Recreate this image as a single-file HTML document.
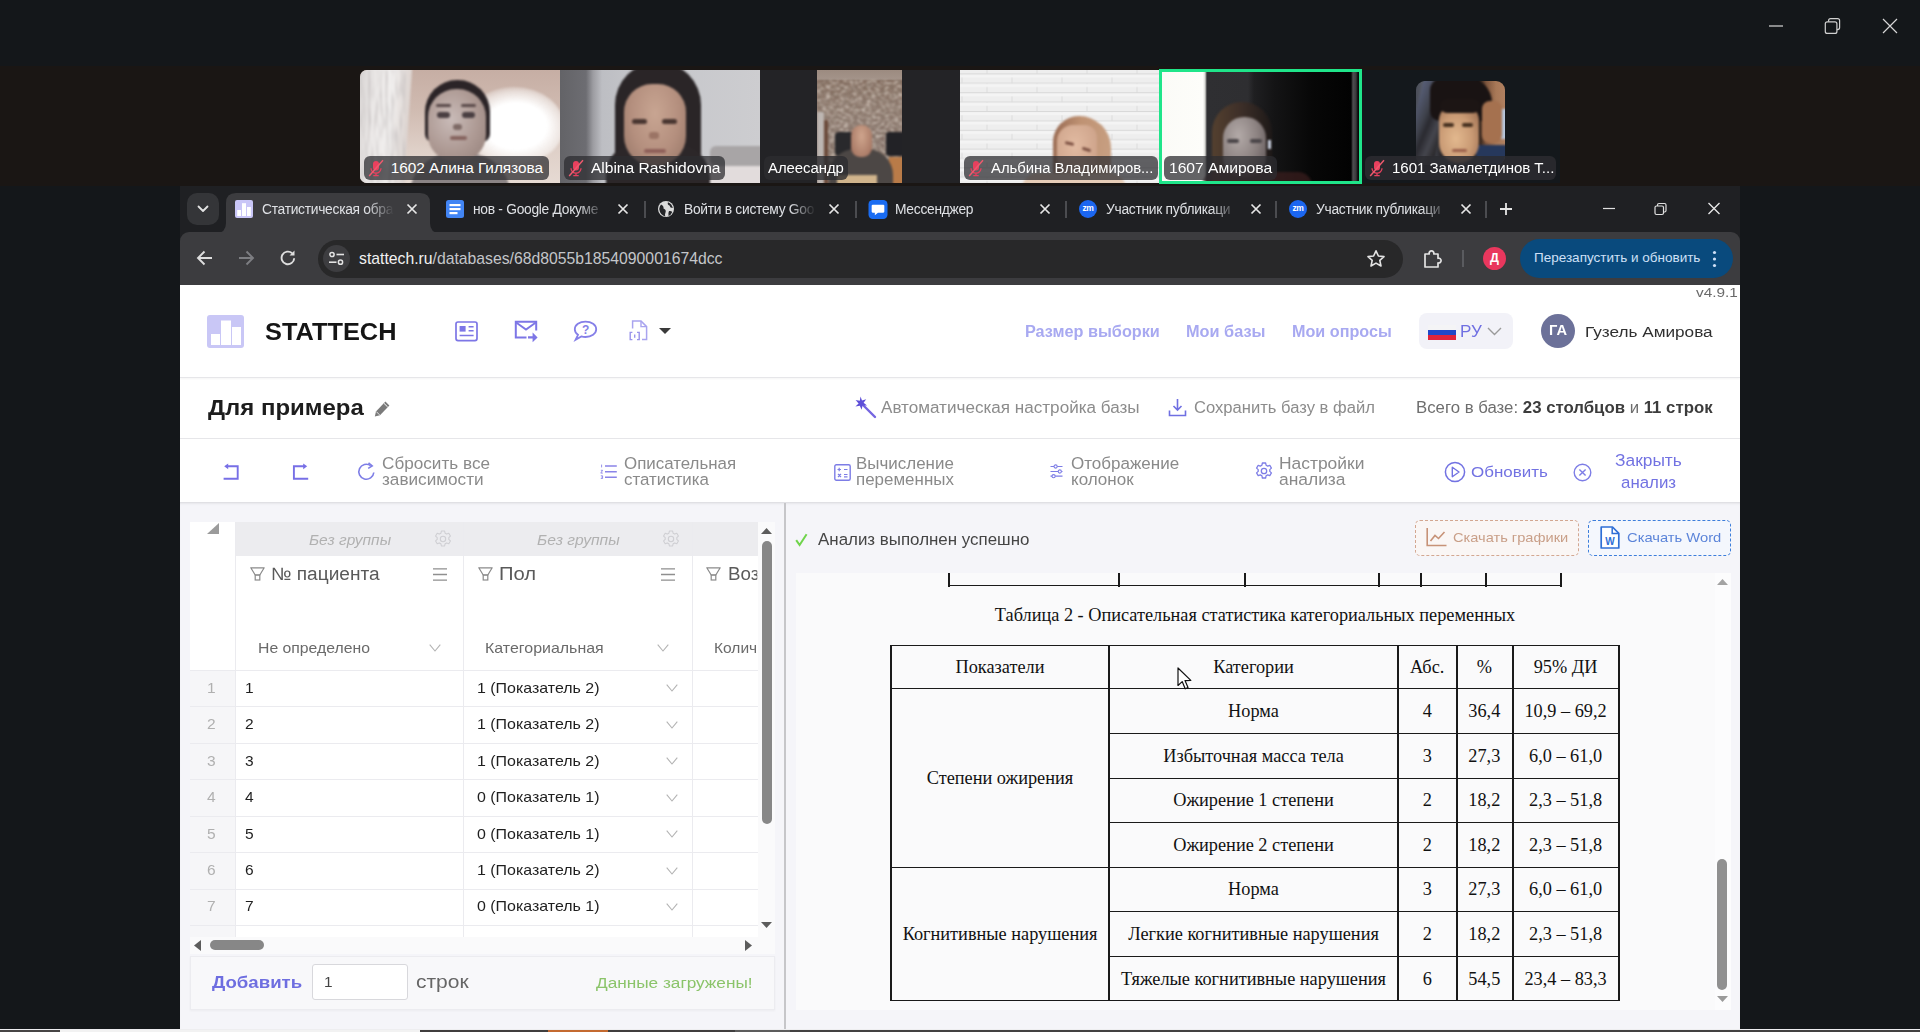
<!DOCTYPE html>
<html lang="ru">
<head>
<meta charset="utf-8">
<title>Zoom</title>
<style>
*{box-sizing:border-box;margin:0;padding:0}
html,body{width:1920px;height:1032px;overflow:hidden;background:#14171a;font-family:"Liberation Sans",sans-serif;}
.abs{position:absolute}
#root{position:relative;width:1920px;height:1032px;overflow:hidden;background:#14171a}
/* ---- zoom frame ---- */
#ztop{left:0;top:0;width:1920px;height:66px;background:#14171a}
#zstrip{left:0;top:66px;width:1920px;height:120px;background:#1a1614}
.thumb{position:absolute;top:70px;width:200px;height:113px;overflow:hidden;background:#222}
.vid{position:absolute;left:0;top:0;right:0;bottom:0;filter:blur(1.1px)}
.zlabel{position:absolute;left:4px;bottom:3px;height:24px;padding:0 0 0 2.5px;border-radius:6px;background:rgba(44,44,48,.74);color:#fff;font-size:15.4px;letter-spacing:-0.05px;line-height:24px;white-space:nowrap;display:flex;align-items:center;overflow:hidden}
.zlabel svg{margin-right:6.3px;flex:none}

/* chrome */
#tabbar{left:0;top:0;width:1560px;height:60px;background:#1f2023}
#tbar{left:0;top:46px;width:1560px;height:53px;background:#3c3c3f;border-radius:9px 9px 0 0}
.tab{position:absolute;top:7px;height:39px;font-size:13.8px;letter-spacing:-0.28px;color:#dfe1e5;line-height:32px;white-space:nowrap}
.tab .tt{position:absolute;left:36px;top:1px;width:132px;height:32px;overflow:hidden;-webkit-mask-image:linear-gradient(90deg,#000 80%,transparent 100%);mask-image:linear-gradient(90deg,#000 80%,transparent 100%)}
.tab .fav{position:absolute;left:9px;top:7px;width:18px;height:18px}
.tab .x{position:absolute;left:180px;top:10px;width:12px;height:12px}
.tsep{position:absolute;top:15px;width:1.5px;height:17px;background:#4b4c50}
.ticon{position:absolute}

/* page */
#page{font-size:17px;color:#8c8c8c}
.t{position:absolute;white-space:nowrap}
.pur{color:#7272e2}
.hline{position:absolute;left:0;width:1560px;height:1px;background:#e6e6e9}
.tl{position:absolute;white-space:nowrap;font-size:17px;line-height:16.5px;color:#8a8a8a}

/* grid */
.gh{position:absolute;white-space:nowrap;color:#5a5a5a}
.rn{position:absolute;left:10px;width:45px;text-align:center;font-size:16px;color:#b0b0b0;line-height:36px}
.c1{position:absolute;left:65px;font-size:15.7px;color:#1f1f1f;line-height:36px}
.c2{position:absolute;left:298px;font-size:15.7px;color:#1f1f1f;line-height:36px;white-space:nowrap}
.rl{position:absolute;left:10px;width:568px;height:1px;background:#ebebef}
.chev{position:absolute}
/* doc */
#doc{position:absolute;left:616px;top:288px;width:935px;height:437px;background:#fafafb;overflow:hidden;font-family:"Liberation Serif",serif;color:#111;font-size:18.3px}
#doc .ln{position:absolute;background:#1a1a1a}
#doc .c{position:absolute;text-align:center;white-space:nowrap;line-height:22px}
/* ---- browser ---- */
#brw{left:180px;top:186px;width:1560px;height:842.5px;background:#fff;overflow:hidden}
#page{left:0;top:99px;width:1560px;height:747px;background:#fff;overflow:hidden}
</style>
</head>
<body>
<div id="root">
  <div id="ztop" class="abs"></div>
  <div id="zstrip" class="abs"></div>


  <!-- zoom window controls -->
  <svg class="abs" style="left:1760px;top:10px" width="150" height="34" viewBox="0 0 150 34">
    <line x1="9" y1="16" x2="23" y2="16" stroke="#c9c9c9" stroke-width="1.3"/>
    <rect x="68.6" y="8.6" width="11" height="11" rx="2" fill="none" stroke="#d0d0d0" stroke-width="1.2"/>
    <rect x="65.3" y="11.8" width="11.6" height="11.6" rx="2" fill="#14171a" stroke="#d0d0d0" stroke-width="1.2"/>
    <path d="M123 9 L137 23 M137 9 L123 23" stroke="#d6d6d6" stroke-width="1.2" fill="none"/>
  </svg>

  <!-- thumb 1 -->
  <div class="thumb" style="left:360px;border-radius:7px 0 0 7px;background:linear-gradient(180deg,#c6aea4 0,#d0bbb1 40px,#dfd0c8 80px,#e6dad3 113px)">
    <div class="vid">
      <div class="abs" style="left:-6px;top:-6px;width:54px;height:130px;background:linear-gradient(90deg,#d6d2d1 0,#ebe8e7 16px,#f1efee 36px,#dcd3cf 54px);transform:skewX(-4deg)"></div>
      <svg class="abs" style="left:0;top:0" width="50" height="113" viewBox="0 0 50 113"><filter id="fcu" x="0" y="0" width="100%" height="100%"><feTurbulence type="fractalNoise" baseFrequency="0.35 0.035" numOctaves="2" seed="4"/><feColorMatrix type="matrix" values="0 0 0 0 0.55  0 0 0 0 0.52  0 0 0 0 0.52  1.8 0 0 0 -0.72"/></filter><rect width="46" height="113" filter="url(#fcu)"/></svg>
      <div class="abs" style="left:104px;top:17px;width:100px;height:78px;border-radius:50%;background:radial-gradient(ellipse at 52% 50%,#ffffff 0,#ffffff 42%,rgba(255,255,255,.55) 62%,rgba(255,255,255,0) 78%)"></div>
      <div class="abs" style="left:65px;top:10px;width:65px;height:62px;border-radius:32px 32px 8px 8px;background:#2b2427"></div>
      <div class="abs" style="left:50px;top:84px;width:100px;height:40px;border-radius:40px 40px 0 0;background:#8b8485"></div>
      <div class="abs" style="left:68px;top:19px;width:58px;height:72px;border-radius:28px 28px 26px 26px;background:radial-gradient(ellipse at 40% 42%,#c9bbb8 0,#ad9993 55%,#937f79 100%)"></div>
      <div class="abs" style="left:77px;top:42px;width:13px;height:6px;background:#4a3f42;border-radius:3px"></div>
      <div class="abs" style="left:102px;top:42px;width:13px;height:6px;background:#4a3f42;border-radius:3px"></div>
      <div class="abs" style="left:76px;top:34px;width:15px;height:3px;background:#5a4a4a;border-radius:2px"></div><div class="abs" style="left:101px;top:34px;width:15px;height:3px;background:#5a4a4a;border-radius:2px"></div><div class="abs" style="left:93px;top:54px;width:9px;height:6px;background:#7e6a66;border-radius:3px"></div>
      <div class="abs" style="left:90px;top:66px;width:17px;height:4px;background:#86645f;border-radius:2px"></div>
    </div>
    <div class="zlabel" style="left:4px;width:185px"><svg width="18" height="18" viewBox="0 0 18 18"><rect x="6" y="2" width="6" height="9.5" rx="3" fill="#e8405e"/><path d="M4 9.2a5 5 0 0 0 10 0M9 14.2v2.2M6.3 16.6h5.4" stroke="#e8405e" stroke-width="1.3" fill="none"/><line x1="2.2" y1="17" x2="16" y2="1.2" stroke="#ee5a6e" stroke-width="1.5"/></svg><span style="display:inline-block;transform:scaleX(1.0);transform-origin:0 50%">1602 Алина Гилязова</span></div>
  </div>

  <!-- thumb 2 -->
  <div class="thumb" style="left:560px;background:linear-gradient(90deg,#636367 0,#6d6d72 26px,#9c9ca1 33px,#bdbec3 42px,#c5c6ca 80px,#cdcdd0 200px)">
    <div class="vid">
      <div class="abs" style="left:130px;top:82px;width:90px;height:50px;border-radius:40px 10px 0 0;background:#e2dcdc"></div>
      <div class="abs" style="left:150px;top:76px;width:60px;height:20px;background:#a8a5a6;border-radius:6px"></div>
      <div class="abs" style="left:55px;top:-8px;width:86px;height:135px;border-radius:43px 43px 14px 14px;background:#2a2527"></div>
      <div class="abs" style="left:46px;top:74px;width:104px;height:50px;border-radius:30px 34px 0 0;background:#2c2729"></div>
      <div class="abs" style="left:64px;top:14px;width:62px;height:82px;border-radius:28px 28px 30px 30px;background:radial-gradient(ellipse at 50% 36%,#c8a592 0,#b48f7e 55%,#957566 100%)"></div>
      <div class="abs" style="left:72px;top:49px;width:15px;height:5px;background:#493631;border-radius:3px"></div>
      <div class="abs" style="left:102px;top:49px;width:15px;height:5px;background:#493631;border-radius:3px"></div>
      <div class="abs" style="left:89px;top:62px;width:10px;height:7px;background:#9b7465;border-radius:3px"></div>
      <div class="abs" style="left:84px;top:79px;width:22px;height:4px;background:#8e5f59;border-radius:2px"></div>
    </div>
    <div class="zlabel" style="left:4px;width:161px"><svg width="18" height="18" viewBox="0 0 18 18"><rect x="6" y="2" width="6" height="9.5" rx="3" fill="#e8405e"/><path d="M4 9.2a5 5 0 0 0 10 0M9 14.2v2.2M6.3 16.6h5.4" stroke="#e8405e" stroke-width="1.3" fill="none"/><line x1="2.2" y1="17" x2="16" y2="1.2" stroke="#ee5a6e" stroke-width="1.5"/></svg><span style="display:inline-block;transform:scaleX(1.015);transform-origin:0 50%">Albina Rashidovna</span></div>
  </div>

  <!-- thumb 3 -->
  <div class="thumb" style="left:760px;background:#232326">
    <div class="abs" style="left:57px;top:0;width:85px;height:113px;overflow:hidden;background:linear-gradient(180deg,#9c8b80 0,#a39389 9px,#80695b 11px,#8a766a 40px,#86736a 70px,#7a685d 113px)">
     <div class="vid">
      <svg class="abs" style="left:0;top:10px" width="85" height="103" viewBox="0 0 85 103"><filter id="fst" x="0" y="0" width="100%" height="100%"><feTurbulence type="fractalNoise" baseFrequency="0.2 0.36" numOctaves="3" seed="7"/><feColorMatrix type="matrix" values="0 0 0 0 0.27  0 0 0 0 0.21  0 0 0 0 0.17  2.2 0 0 0 -0.85"/></filter><filter id="fst2" x="0" y="0" width="100%" height="100%"><feTurbulence type="fractalNoise" baseFrequency="0.22 0.38" numOctaves="3" seed="21"/><feColorMatrix type="matrix" values="0 0 0 0 0.76  0 0 0 0 0.68  0 0 0 0 0.61  2.0 0 0 0 -0.85"/></filter><rect width="85" height="103" filter="url(#fst)"/><rect width="85" height="103" filter="url(#fst2)"/></svg>
      <div class="abs" style="left:0;top:42px;width:7px;height:75px;background:#bdb6b2"></div>
      <div class="abs" style="left:7px;top:50px;width:4px;height:65px;background:#6b4a3a"></div>
      <div class="abs" style="left:18px;top:62px;width:19px;height:24px;border-radius:4px;background:#29292c"></div>
      <div class="abs" style="left:69px;top:62px;width:18px;height:24px;border-radius:3px 0 0 3px;background:#222226"></div>
      <div class="abs" style="left:72px;top:87px;width:15px;height:28px;background:#b97b48"></div>
      <div class="abs" style="left:12px;top:79px;width:64px;height:42px;border-radius:26px 26px 0 0;background:#4c4745"></div>
      <div class="abs" style="left:34px;top:55px;width:21px;height:32px;border-radius:10px 10px 9px 9px;background:radial-gradient(ellipse at 50% 35%,#cfa58d 0,#aa7b67 75%,#8c5f4f 100%)"></div>
      <div class="abs" style="left:20px;top:105px;width:40px;height:10px;background:#d0b48c"></div>
     </div>
    </div>
    <div class="zlabel" style="left:4px;width:84px;padding-left:3.8px;background:rgba(44,44,48,.8)"><span style="display:inline-block;transform:scaleX(0.97);transform-origin:0 50%">Алеесандр</span></div>
  </div>

  <!-- thumb 4 -->
  <div class="thumb" style="left:960px;width:199px;background:#ececec">
    <svg class="abs" style="left:0;top:0" width="199" height="113" viewBox="0 0 199 113"><defs><pattern id="bk" width="50" height="18.8" patternUnits="userSpaceOnUse" patternTransform="translate(-12 3.4)"><rect width="50" height="18.8" fill="#eeeeee"/><path d="M0 0.5 H50 M0 9.9 H50" stroke="#d9d9d9" stroke-width="1.1"/><path d="M14 0.5 V9.9 M39 9.9 V18.8" stroke="#dcdcdc" stroke-width="1"/><rect x="0" y="1.2" width="50" height="3" fill="#f4f4f4"/><rect x="0" y="10.6" width="50" height="3" fill="#f4f4f4"/></pattern></defs><rect width="199" height="113" fill="url(#bk)"/></svg>
    <div class="vid">
      <div class="abs" style="left:93px;top:46px;width:58px;height:74px;border-radius:26px 32px 20px 20px;background:linear-gradient(100deg,#94664f 0,#bf9273 40%,#c9a285 100%)"></div>
      <div class="abs" style="left:97px;top:55px;width:40px;height:52px;border-radius:16px 12px 20px 20px;background:radial-gradient(ellipse at 45% 40%,#e2bba2 0,#cfa58c 70%,#b98d76 100%)"></div>
      <div class="abs" style="left:105px;top:72px;width:9px;height:3px;background:#7a4e40;border-radius:2px;transform:rotate(12deg)"></div>
      <div class="abs" style="left:122px;top:78px;width:9px;height:3px;background:#7a4e40;border-radius:2px;transform:rotate(18deg)"></div>
      <div class="abs" style="left:62px;top:103px;width:104px;height:16px;border-radius:30px 30px 0 0;background:#e6cdb8"></div>
    </div>
    <div class="zlabel" style="left:4px;width:194px"><svg width="18" height="18" viewBox="0 0 18 18"><rect x="6" y="2" width="6" height="9.5" rx="3" fill="#e8405e"/><path d="M4 9.2a5 5 0 0 0 10 0M9 14.2v2.2M6.3 16.6h5.4" stroke="#e8405e" stroke-width="1.3" fill="none"/><line x1="2.2" y1="17" x2="16" y2="1.2" stroke="#ee5a6e" stroke-width="1.5"/></svg><span style="display:inline-block;transform:scaleX(0.968);transform-origin:0 50%">Альбина Владимиров...</span></div>
  </div>

  <!-- thumb 5 (active speaker) -->
  <div class="thumb" style="left:1159px;top:69px;width:203px;height:115px;border:3px solid #1fe58a;background:
     linear-gradient(90deg,#fbfbf7 0,#fdfdfa 41px,#d8d8d4 43px,#2f2f32 45px,#2e2e31 86px,#1f1f21 92px,#141415 112px,#070707 150px,#020202 189px,#4e4e50 191px,#3a3a3c 194px,#0a0a0a 196px)">
    <div class="vid">
      <div class="abs" style="left:50px;top:30px;width:60px;height:88px;border-radius:30px 30px 10px 10px;background:linear-gradient(90deg,#54402f 0,#3c2e28 50%,#1e1918 100%)"></div>
      <div class="abs" style="left:61px;top:45px;width:43px;height:60px;border-radius:21px 21px 19px 19px;background:radial-gradient(ellipse at 36% 32%,#b3aaa8 0,#8b8180 50%,#554c4d 100%)"></div>
      <div class="abs" style="left:65px;top:67px;width:12px;height:4px;background:#4a4548;border-radius:2px"></div>
      <div class="abs" style="left:88px;top:67px;width:12px;height:4px;background:#4a4548;border-radius:2px"></div>
      <div class="abs" style="left:106px;top:68px;width:3px;height:9px;background:#cfd6e6"></div>
      <div class="abs" style="left:40px;top:100px;width:110px;height:14px;background:rgba(60,30,30,.7);border-radius:20px 20px 0 0"></div>
    </div>
    <div class="zlabel" style="left:2px;bottom:1px;width:113px;padding-left:5px"><span style="display:inline-block;transform:scaleX(1.02);transform-origin:0 50%">1607 Амирова</span></div>
  </div>

  <!-- thumb 6 -->
  <div class="thumb" style="left:1362px;width:198px;background:#14181c">
    <div class="abs" style="left:54px;top:11px;width:89px;height:84px;border-radius:9px;overflow:hidden;background:linear-gradient(90deg,#4a4d58 0,#5a5d66 8px,#2a2a30 14px,#3c3d44 20px,#1e1a1a 28px,#1a1412 62px,#7d553d 70px,#a87857 80px,#b08060 89px)">
     <div class="vid">
      <div class="abs" style="left:-4px;top:-4px;width:30px;height:100px;background:linear-gradient(100deg,#59607a 0,#3f424c 35%,#2a2a30 50%,#45464e 70%,#1f1c1c 100%);transform:skewX(-14deg)"></div>
      <div class="abs" style="left:80px;top:28px;width:12px;height:30px;background:#b7c6dc"></div>
      <div class="abs" style="left:14px;top:-4px;width:62px;height:44px;border-radius:14px 26px 10px 10px;background:#191313"></div>
      <div class="abs" style="left:66px;top:20px;width:20px;height:42px;border-radius:8px;background:#a5714f"></div>
      <div class="abs" style="left:60px;top:64px;width:32px;height:24px;background:#26385c"></div>
      <div class="abs" style="left:14px;top:76px;width:52px;height:12px;background:#3b4047"></div>
      <div class="abs" style="left:23px;top:24px;width:40px;height:58px;border-radius:16px 16px 21px 21px;background:radial-gradient(ellipse at 42% 58%,#e2b88e 0,#c99a74 50%,#8f6248 100%)"></div>
      <div class="abs" style="left:24px;top:18px;width:40px;height:14px;border-radius:8px;background:#1c1514"></div>
      <div class="abs" style="left:27px;top:42px;width:11px;height:4px;background:#46301f;border-radius:2px"></div>
      <div class="abs" style="left:46px;top:42px;width:11px;height:4px;background:#46301f;border-radius:2px"></div>
      <div class="abs" style="left:36px;top:68px;width:15px;height:3px;background:#9a5f4a;border-radius:2px"></div>
     </div>
    </div>
    <div class="zlabel" style="left:3px;width:191px;background:rgba(44,44,48,.85)"><svg width="18" height="18" viewBox="0 0 18 18"><rect x="6" y="2" width="6" height="9.5" rx="3" fill="#e8405e"/><path d="M4 9.2a5 5 0 0 0 10 0M9 14.2v2.2M6.3 16.6h5.4" stroke="#e8405e" stroke-width="1.3" fill="none"/><line x1="2.2" y1="17" x2="16" y2="1.2" stroke="#ee5a6e" stroke-width="1.5"/></svg><span style="display:inline-block;transform:scaleX(0.98);transform-origin:0 50%">1601 Замалетдинов Т...</span></div>
  </div>

  <!-- BROWSER -->
  <div id="brw" class="abs">
    <div id="tabbar" class="abs">
      <!-- tab search -->
      <div class="abs" style="left:7px;top:7px;width:32px;height:32px;border-radius:10px;background:#343538"></div>
      <svg class="abs" style="left:17px;top:19px" width="12" height="8" viewBox="0 0 12 8"><path d="M1.5 1.5 L6 6 L10.5 1.5" stroke="#e3e3e3" stroke-width="1.8" fill="none" stroke-linecap="round" stroke-linejoin="round"/></svg>
      <!-- active tab -->
      <svg class="abs" style="left:36px;top:7px" width="226" height="40" viewBox="0 0 226 40"><path d="M0 40 Q10 40 10 30 L10 10 Q10 0 20 0 L204 0 Q214 0 214 10 L214 30 Q214 40 224 40 Z" fill="#3c3c3f"/></svg>
      <div class="tab" style="left:46px;width:204px">
        <svg class="fav" viewBox="0 0 18 18"><rect width="18" height="18" rx="2" fill="#c9c6f7"/><rect x="2.2" y="10" width="3.8" height="6" fill="#fff"/><rect x="7" y="3.2" width="4" height="12.8" fill="#fff"/><rect x="12" y="7" width="3.8" height="9" fill="#fff"/></svg>
        <div class="tt">Статистическая обра</div><svg class="x" viewBox="0 0 12 12"><path d="M1.5 1.5 L10.5 10.5 M10.5 1.5 L1.5 10.5" stroke="#e6e6e6" stroke-width="1.7" fill="none"/></svg>
      </div>
      <div class="tab" style="left:257px;width:204px">
        <svg class="fav" viewBox="0 0 18 18"><rect width="18" height="18" rx="2.5" fill="#4285f4"/><rect x="3.5" y="4" width="11" height="2.2" fill="#fff"/><rect x="3.5" y="8" width="11" height="2.2" fill="#fff"/><rect x="3.5" y="12" width="8" height="2.2" fill="#fff"/></svg>
        <div class="tt">нов - Google Докуме</div><svg class="x" viewBox="0 0 12 12"><path d="M1.5 1.5 L10.5 10.5 M10.5 1.5 L1.5 10.5" stroke="#e6e6e6" stroke-width="1.7" fill="none"/></svg>
      </div>
      <div class="tsep" style="left:464px"></div>
      <div class="tab" style="left:468px;width:204px">
        <svg class="fav" viewBox="0 0 18 18"><circle cx="9" cy="9" r="8" fill="#dcdcdc"/><path d="M4 4.5 Q7 6 6.5 8.5 Q9.5 9.5 8.5 12.5 Q7.5 14.5 8.5 16.5 Q3 15 2.2 9 Q2.5 6 4 4.5Z M11 2.2 Q10 4.5 12.5 5.5 Q13 8 15.8 8 Q15 4 11 2.2Z M12 11 Q14 10.5 15.3 12 Q14 15 11.5 16 Q11 13 12 11Z" fill="#242528"/></svg>
        <div class="tt">Войти в систему Goo</div><svg class="x" viewBox="0 0 12 12"><path d="M1.5 1.5 L10.5 10.5 M10.5 1.5 L1.5 10.5" stroke="#e6e6e6" stroke-width="1.7" fill="none"/></svg>
      </div>
      <div class="tsep" style="left:675px"></div>
      <div class="tab" style="left:679px;width:204px">
        <svg class="fav" viewBox="0 0 18 18" style="width:20px;height:19px;left:9px;top:7px"><rect width="18" height="18" rx="4" fill="#1a6cf2"/><path d="M4 4.5 h10 a1 1 0 0 1 1 1 v5.5 a1 1 0 0 1 -1 1 h-5 l-3 2.5 v-2.5 h-2 a1 1 0 0 1 -1 -1 v-5.5 a1 1 0 0 1 1 -1z" fill="#fff"/></svg>
        <div class="tt">Мессенджер</div><svg class="x" viewBox="0 0 12 12"><path d="M1.5 1.5 L10.5 10.5 M10.5 1.5 L1.5 10.5" stroke="#e6e6e6" stroke-width="1.7" fill="none"/></svg>
      </div>
      <div class="tsep" style="left:885px"></div>
      <div class="tab" style="left:890px;width:204px"><svg class="fav" viewBox="0 0 18 18"><circle cx="9" cy="9" r="9" fill="#1b66f0"/><text x="9" y="11.2" font-family="Liberation Sans" font-weight="700" font-size="8.5" fill="#fff" text-anchor="middle">zm</text></svg>
        <div class="tt">Участник публикаци</div><svg class="x" viewBox="0 0 12 12"><path d="M1.5 1.5 L10.5 10.5 M10.5 1.5 L1.5 10.5" stroke="#e6e6e6" stroke-width="1.7" fill="none"/></svg>
      </div>
      <div class="tsep" style="left:1095px"></div>
      <div class="tab" style="left:1100px;width:204px"><svg class="fav" viewBox="0 0 18 18"><circle cx="9" cy="9" r="9" fill="#1b66f0"/><text x="9" y="11.2" font-family="Liberation Sans" font-weight="700" font-size="8.5" fill="#fff" text-anchor="middle">zm</text></svg>
        <div class="tt">Участник публикаци</div><svg class="x" viewBox="0 0 12 12"><path d="M1.5 1.5 L10.5 10.5 M10.5 1.5 L1.5 10.5" stroke="#e6e6e6" stroke-width="1.7" fill="none"/></svg>
      </div>
      <div class="tsep" style="left:1305px"></div>
      <!-- plus -->
      <svg class="abs" style="left:1319px;top:16px" width="14" height="14" viewBox="0 0 14 14"><path d="M7 1 V13 M1 7 H13" stroke="#e6e6e6" stroke-width="1.8" fill="none"/></svg>
      <!-- window ctrls -->
      <svg class="abs" style="left:1415px;top:12px" width="140" height="22" viewBox="0 0 140 22"><line x1="8" y1="10.5" x2="20" y2="10.5" stroke="#e0e0e0" stroke-width="1.2"/><rect x="62.5" y="5.5" width="8.5" height="8.5" rx="1.5" fill="none" stroke="#e0e0e0" stroke-width="1.2"/><rect x="60" y="8" width="8.5" height="8.5" rx="1.5" fill="#1f2023" stroke="#e0e0e0" stroke-width="1.2"/><path d="M113.5 5 L124.5 16 M124.5 5 L113.5 16" stroke="#e6e6e6" stroke-width="1.4" fill="none"/></svg>
    </div>
    <div id="tbar" class="abs">
      <!-- nav icons -->
      <svg class="abs" style="left:16px;top:18px" width="18" height="16" viewBox="0 0 18 16"><path d="M16 8 H2.5 M8.5 1.5 L2 8 L8.5 14.5" stroke="#dedede" stroke-width="1.9" fill="none"/></svg>
      <svg class="abs" style="left:57px;top:18px" width="18" height="16" viewBox="0 0 18 16"><path d="M2 8 H15.5 M9.5 1.5 L16 8 L9.5 14.5" stroke="#7d7e82" stroke-width="1.9" fill="none"/></svg>
      <svg class="abs" style="left:99px;top:17px" width="18" height="18" viewBox="0 0 18 18"><path d="M15.2 9.2 A6.3 6.3 0 1 1 13.2 4.3" stroke="#dedede" stroke-width="1.9" fill="none"/><path d="M10.5 6.5 H15.5 V1.5 Z" fill="#dedede"/></svg>
      <!-- omnibox -->
      <div class="abs" style="left:138px;top:8px;width:1085px;height:38px;border-radius:19px;background:#282829"></div>
      <div class="abs" style="left:143px;top:13px;width:27px;height:27px;border-radius:14px;background:#3d3d40"></div>
      <svg class="abs" style="left:148px;top:19px" width="17" height="15" viewBox="0 0 17 15"><circle cx="4" cy="3.5" r="2.1" fill="none" stroke="#e3e3e3" stroke-width="1.5"/><line x1="8.5" y1="3.5" x2="16" y2="3.5" stroke="#e3e3e3" stroke-width="1.6"/><circle cx="12.5" cy="11.2" r="2.1" fill="none" stroke="#e3e3e3" stroke-width="1.5"/><line x1="1" y1="11.2" x2="8.5" y2="11.2" stroke="#e3e3e3" stroke-width="1.6"/></svg>
      <div class="abs" style="left:179px;top:8px;height:38px;line-height:37px;font-size:15.75px;color:#c4c6c9;white-space:nowrap"><span style="color:#f1f1f1">stattech.ru</span>/databases/68d8055b1854090001674dcc</div>
      <svg class="abs" style="left:1186px;top:17px" width="20" height="19" viewBox="0 0 20 19"><path d="M10 1.8 L12.4 7 L18 7.6 L13.8 11.4 L15 17 L10 14.1 L5 17 L6.2 11.4 L2 7.6 L7.6 7 Z" fill="none" stroke="#e3e3e3" stroke-width="1.6" stroke-linejoin="round"/></svg>
      <svg class="abs" style="left:1242px;top:16px" width="21" height="21" viewBox="0 0 21 21"><path d="M3 6 h4.2 a2.4 2.4 0 1 1 4.6 0 H16 v4.3 a2.4 2.4 0 1 1 0 4.6 V19 H3 Z" fill="none" stroke="#e3e3e3" stroke-width="1.7" stroke-linejoin="round"/></svg>
      <div class="abs" style="left:1282px;top:18px;width:1.5px;height:17px;background:#5a5b5f"></div>
      <div class="abs" style="left:1303px;top:15px;width:23px;height:23px;border-radius:12px;background:#e9375d;color:#fff;font-size:12.5px;font-weight:700;text-align:center;line-height:23px">Д</div>
      <div class="abs" style="left:1340px;top:7px;width:213px;height:39px;border-radius:20px;background:#094a7d"></div>
      <div class="abs" style="left:1354px;top:7px;height:39px;line-height:38px;font-size:13.5px;color:#cfe0f7;white-space:nowrap">Перезапустить и обновить</div>
      <svg class="abs" style="left:1532px;top:18px" width="5" height="18" viewBox="0 0 5 18"><circle cx="2.5" cy="2.5" r="1.6" fill="#cfe0f7"/><circle cx="2.5" cy="9" r="1.6" fill="#cfe0f7"/><circle cx="2.5" cy="15.5" r="1.6" fill="#cfe0f7"/></svg>
    </div>
    <div id="page" class="abs">
      <div class="t" style="left:1515.86px;top:-1.25px;font-size:13.27px;line-height:17px;color:#6b6b6b;transform:scaleX(1.1561);transform-origin:0 50%;">v4.9.1</div>
      <svg class="abs" style="left:27px;top:29.5px" width="37" height="33" viewBox="0 0 37 33"><rect width="37" height="33" rx="3" fill="#c9c7f6"/><rect x="4" y="19" width="9" height="11" fill="#fff"/><rect x="14" y="5.5" width="10" height="24.5" fill="#fff"/><rect x="25" y="12" width="9" height="18" fill="#fff"/></svg>
      <div class="t" style="left:84.91px;top:31.20px;font-size:24.58px;line-height:31px;color:#151515;font-weight:700;transform:scaleX(1.0317);transform-origin:0 50%;">STATTECH</div>
      <svg class="abs" style="left:275.4px;top:35.7px" width="23" height="21" viewBox="0 0 23 21"><rect x="1" y="1" width="21" height="18.6" rx="2" fill="none" stroke="#7d76e6" stroke-width="1.7"/><rect x="4.6" y="5" width="6" height="5.6" fill="#7d76e6"/><path d="M13.6 5.8 H18.6 M13.6 9.8 H18.6 M4.6 14.6 H18.6" stroke="#7d76e6" stroke-width="1.5"/></svg>
      <svg class="abs" style="left:334px;top:35.4px" width="25" height="23" viewBox="0 0 25 23"><path d="M12.5 17.4 H1.8 V1.8 H22.2 V10.5" fill="none" stroke="#7d76e6" stroke-width="2"/><path d="M1.8 2.2 L12 9.6 L22.2 2.2" fill="none" stroke="#7d76e6" stroke-width="1.9"/><path d="M14 16.2 H18.6 V12.6 L23.6 17.4 L18.6 22.2 V18.6 H14 Z" fill="#7d76e6"/></svg>
      <svg class="abs" style="left:393px;top:35.3px" width="25" height="23" viewBox="0 0 25 23"><path d="M12.5 1.6 C18.5 1.6 23.2 5 23.2 9.3 C23.2 13.6 18.5 17 12.5 17 C11 17 9.6 16.8 8.3 16.4 L2.6 19.8 L5 14.8 C2.9 13.4 1.8 11.5 1.8 9.3 C1.8 5 6.5 1.6 12.5 1.6Z" fill="none" stroke="#857fe8" stroke-width="1.8"/><text x="12.6" y="13.6" font-family="Liberation Sans" font-weight="700" font-size="12" fill="#857fe8" text-anchor="middle">?</text></svg>
      <svg class="abs" style="left:449.3px;top:35px" width="19" height="21" viewBox="0 0 19 21"><path d="M3.6 8.6 V1 H12 L17.6 6.6 V19.4 H13" fill="none" stroke="#a9a4ef" stroke-width="1.5"/><path d="M12 1 V6.6 H17.6" fill="none" stroke="#a9a4ef" stroke-width="1.4"/><path d="M3.4 12.4 H1.2 V19.6 H3.4 M8 12.4 H10.2 V19.6 H8 M5.7 14.6 V17.8" fill="none" stroke="#9a94ec" stroke-width="1.4"/></svg>
      <svg class="abs" style="left:479px;top:43px" width="12" height="6" viewBox="0 0 12 6"><path d="M0 0 H12 L6 6Z" fill="#3a3a3a"/></svg>
      <div class="t" style="left:845.36px;top:37.00px;font-size:15.71px;line-height:20px;color:#a8a9f1;font-weight:700;transform:scaleX(1.0344);transform-origin:0 50%;">Размер выборки</div>
      <div class="t" style="left:1006.40px;top:37.00px;font-size:15.71px;line-height:20px;color:#a8a9f1;font-weight:700;transform:scaleX(1.0381);transform-origin:0 50%;">Мои базы</div>
      <div class="t" style="left:1112.11px;top:37.00px;font-size:15.71px;line-height:20px;color:#a8a9f1;font-weight:700;transform:scaleX(1.0292);transform-origin:0 50%;">Мои опросы</div>
      <div class="abs" style="left:1239px;top:28px;width:93.5px;height:35.5px;border-radius:8px;background:#f2f2f8"></div>
      <div class="abs" style="left:1247.7px;top:39.5px;width:28.3px;height:15.5px;background:linear-gradient(180deg,#f4f4f6 0,#f4f4f6 33%,#2148c8 33%,#2148c8 66%,#e0243a 66%)"></div>
      <div class="t" style="left:1279.56px;top:36.70px;font-size:15.64px;line-height:20px;color:#6f6fe2;transform:scaleX(1.0925);transform-origin:0 50%;">РУ</div>
      <svg class="abs" style="left:1307px;top:42px" width="15" height="9" viewBox="0 0 15 9"><path d="M1 1 L7.5 7.5 L14 1" stroke="#9a9a9a" stroke-width="1.4" fill="none"/></svg>
      <div class="abs" style="left:1361.4px;top:28.8px;width:34px;height:34px;border-radius:17px;background:#6c7199"></div>
      <div class="t" style="left:1369.39px;top:36.20px;font-size:14.53px;line-height:19px;color:#fff;font-weight:700;transform:scaleX(1.0116);transform-origin:0 50%;">ГА</div>
      <div class="t" style="left:1405.35px;top:36.80px;font-size:15.50px;line-height:20px;color:#303030;transform:scaleX(1.1088);transform-origin:0 50%;">Гузель Амирова</div>
      <div class="hline" style="top:91.8px;box-shadow:0 1px 2px rgba(0,0,0,.06)"></div>
      <div class="t" style="left:28.08px;top:108.50px;font-size:22.07px;line-height:28px;color:#1d1d1d;font-weight:700;transform:scaleX(1.0862);transform-origin:0 50%;">Для примера</div>
      <svg class="abs" style="left:194px;top:114.5px" width="17" height="17" viewBox="0 0 17 17"><path d="M0.8 16.4 L2 11.6 L11.4 1.6 L15.4 5.4 L6 15.2 Z" fill="#7a7a7a"/><path d="M10 3.4 L13.6 6.9" stroke="#fff" stroke-width="1"/><path d="M2.3 11.6 L5.6 14.9" stroke="#fff" stroke-width=".8"/></svg>
      <svg class="abs" style="left:674px;top:111px" width="23" height="23" viewBox="0 0 23 23"><path d="M8 8 L21 21" stroke="#7565e0" stroke-width="2.4" stroke-linecap="round"/><path d="M6.5 0.5 L8 4.6 L12.2 3.2 L9.6 6.8 L13 9.6 L8.6 9.6 L7.6 13.8 L5.8 9.8 L1.4 10.6 L4.6 7.4 L1.6 4 L5.8 4.8 Z" fill="#5e4fd8"/></svg>
      <div class="t" style="left:701.06px;top:112.70px;font-size:15.78px;line-height:20px;color:#8c8c8c;transform:scaleX(1.0840);transform-origin:0 50%;">Автоматическая настройка базы</div>
      <svg class="abs" style="left:987.5px;top:113px" width="19" height="19" viewBox="0 0 19 19"><path d="M9.5 1 V12 M5.5 8 L9.5 12 L13.5 8" stroke="#6f6fe2" stroke-width="1.6" fill="none"/><path d="M1.5 12.5 V17.5 H17.5 V12.5" stroke="#6f6fe2" stroke-width="1.6" fill="none"/></svg>
      <div class="t" style="left:1013.69px;top:112.70px;font-size:15.78px;line-height:20px;color:#8c8c8c;transform:scaleX(1.0526);transform-origin:0 50%;">Сохранить базу в файл</div>
      <div class="t" style="left:1236.08px;top:112.70px;font-size:15.78px;line-height:20px;color:#6e6e6e;transform:scaleX(1.0645);transform-origin:0 50%;">Всего в базе: <b style="color:#3c3c3c">23 столбцов</b> и <b style="color:#3c3c3c">11 строк</b></div>
      <div class="hline" style="top:153.2px"></div>
      <svg class="abs" style="left:43px;top:178px" width="17" height="18" viewBox="0 0 17 18"><path d="M3 3.3 H14.7 V15.8 H0.6" stroke="#776fe6" stroke-width="1.9" fill="none"/><path d="M5.2 0.4 L1.2 3.3 L5.2 6.2 Z" fill="#776fe6"/></svg>
      <svg class="abs" style="left:111.5px;top:178px" width="17" height="18" viewBox="0 0 17 18"><path d="M13 3.3 H1.9 V15.8 H16.2" stroke="#776fe6" stroke-width="1.9" fill="none"/><path d="M11.2 0.4 L15.2 3.3 L11.2 6.2 Z" fill="#776fe6"/></svg>
      <svg class="abs" style="left:177.3px;top:176.7px" width="19" height="19" viewBox="0 0 19 19"><path d="M16.8 10.5 A7.5 7.5 0 1 1 13.6 3.6" stroke="#7d7de6" stroke-width="1.6" fill="none"/><path d="M11.5 0.8 L15.2 3.9 L11.2 6.4" stroke="#7d7de6" stroke-width="1.6" fill="none"/></svg>
      <div class="t" style="left:201.96px;top:169.05px;font-size:15.71px;line-height:20px;color:#8a8a8a;transform:scaleX(1.0921);transform-origin:0 50%;">Сбросить все</div>
      <div class="t" style="left:202.04px;top:184.85px;font-size:15.71px;line-height:20px;color:#8a8a8a;transform:scaleX(1.0921);transform-origin:0 50%;">зависимости</div>
      <svg class="abs" style="left:420px;top:179px" width="18" height="15" viewBox="0 0 18 15"><path d="M5 2 H16.8 M5 7.7 H16.8 M5 13.2 H16.8" stroke="#8a84e8" stroke-width="1.5"/><path d="M1.6 0.6 V3.4 M0.8 6.3 H2.6 L0.8 9.1 H2.8 M0.8 11.8 H2.6 V14.6 H0.8 M1.4 13.2 H2.6" stroke="#8a84e8" stroke-width="0.9" fill="none"/></svg>
      <div class="t" style="left:443.77px;top:169.05px;font-size:15.71px;line-height:20px;color:#8a8a8a;transform:scaleX(1.0757);transform-origin:0 50%;">Описательная</div>
      <div class="t" style="left:443.84px;top:184.85px;font-size:15.71px;line-height:20px;color:#8a8a8a;transform:scaleX(1.0757);transform-origin:0 50%;">статистика</div>
      <svg class="abs" style="left:653.5px;top:178.5px" width="17" height="17" viewBox="0 0 17 17"><rect x="0.8" y="0.8" width="15.4" height="15.4" rx="1.5" fill="none" stroke="#7d7de6" stroke-width="1.4"/><path d="M3.5 5.5 H7 M5.2 3.8 V7.2 M10 5.5 H13.5 M4 10 L7 13 M7 10 L4 13 M10 10.5 H13.5 M10 12.8 H13.5" stroke="#7d7de6" stroke-width="1.2"/></svg>
      <div class="t" style="left:676.07px;top:169.05px;font-size:15.71px;line-height:20px;color:#8a8a8a;transform:scaleX(1.0791);transform-origin:0 50%;">Вычисление</div>
      <div class="t" style="left:676.14px;top:184.85px;font-size:15.71px;line-height:20px;color:#8a8a8a;transform:scaleX(1.0791);transform-origin:0 50%;">переменных</div>
      <svg class="abs" style="left:870px;top:178.5px" width="13" height="15" viewBox="0 0 13 15"><path d="M0.5 2.5 H12.5 M0.5 7.5 H12.5 M0.5 12.2 H12.5" stroke="#7d7de6" stroke-width="1.2"/><circle cx="5.6" cy="2.5" r="1.6" fill="#fff" stroke="#7d7de6" stroke-width="1.1"/><circle cx="9.8" cy="7.5" r="1.6" fill="#fff" stroke="#7d7de6" stroke-width="1.1"/><circle cx="3.6" cy="12.2" r="1.6" fill="#fff" stroke="#7d7de6" stroke-width="1.1"/></svg>
      <div class="t" style="left:890.66px;top:169.05px;font-size:15.71px;line-height:20px;color:#8a8a8a;transform:scaleX(1.0838);transform-origin:0 50%;">Отображение</div>
      <div class="t" style="left:890.74px;top:184.85px;font-size:15.71px;line-height:20px;color:#8a8a8a;transform:scaleX(1.0838);transform-origin:0 50%;">колонок</div>
      <svg class="abs" style="left:1075px;top:177.4px" width="18" height="18" viewBox="0 0 18 18"><path d="M7.4 1 h3.2 l.5 2.2 1.6.9 2.1-.8 1.6 2.8 -1.6 1.5 v1.8 l1.6 1.5 -1.6 2.8 -2.1-.8 -1.6.9 -.5 2.2 h-3.2 l-.5-2.2 -1.6-.9 -2.1.8 -1.6-2.8 1.6-1.5 v-1.8 l-1.6-1.5 1.6-2.8 2.1.8 1.6-.9z" fill="none" stroke="#7d7de6" stroke-width="1.3" stroke-linejoin="round"/><circle cx="9" cy="9" r="2.7" fill="none" stroke="#7d7de6" stroke-width="1.3"/></svg>
      <div class="t" style="left:1099.04px;top:169.05px;font-size:15.71px;line-height:20px;color:#8a8a8a;transform:scaleX(1.1087);transform-origin:0 50%;">Настройки</div>
      <div class="t" style="left:1099.14px;top:184.85px;font-size:15.71px;line-height:20px;color:#8a8a8a;transform:scaleX(1.1087);transform-origin:0 50%;">анализа</div>
      <svg class="abs" style="left:1263.5px;top:175.5px" width="22" height="22" viewBox="0 0 22 22"><circle cx="11" cy="11" r="9.6" fill="none" stroke="#7272e2" stroke-width="1.5"/><path d="M8.3 6.3 L15 11 L8.3 15.7 Z" fill="none" stroke="#7272e2" stroke-width="1.4" stroke-linejoin="round"/></svg>
      <div class="t" style="left:1291.07px;top:176.90px;font-size:15.50px;line-height:20px;color:#7272e2;transform:scaleX(1.0950);transform-origin:0 50%;">Обновить</div>
      <svg class="abs" style="left:1393.3px;top:177.5px" width="19" height="19" viewBox="0 0 19 19"><circle cx="9.5" cy="9.5" r="8.3" fill="none" stroke="#7d7de6" stroke-width="1.4"/><path d="M6.4 6.4 L12.6 12.6 M12.6 6.4 L6.4 12.6" stroke="#7d7de6" stroke-width="1.4"/></svg>
      <div class="t" style="left:1435.04px;top:165.80px;font-size:15.92px;line-height:20px;color:#7272e2;transform:scaleX(1.0911);transform-origin:0 50%;">Закрыть</div>
      <div class="t" style="left:1440.77px;top:187.70px;font-size:15.92px;line-height:20px;color:#7272e2;transform:scaleX(1.0610);transform-origin:0 50%;">анализ</div>
      <div class="abs" style="left:0;top:217.3px;width:1560px;height:530px;background:#f5f5f9;box-shadow:inset 0 3px 3px -2px rgba(0,0,0,.13)"></div>
      <div class="abs" style="left:10px;top:237px;width:45px;height:147.7px;background:#fff"></div>
      <svg class="abs" style="left:27px;top:238px" width="12" height="11" viewBox="0 0 12 11"><path d="M12 0 V11 H0 Z" fill="#9b9b9b"/></svg>
      <div class="abs" style="left:55px;top:237px;width:523px;height:34px;background:#ececef"></div>
      <div class="abs" style="left:55px;top:271px;width:523px;height:381px;background:#fff"></div>
      <div class="abs" style="left:10px;top:384.7px;width:45px;height:267.3px;background:#f6f6f8"></div>
      <div class="abs" style="left:55px;top:237px;width:1px;height:415px;background:#ebebef"></div>
      <div class="abs" style="left:283.4px;top:237px;width:1px;height:415px;background:#ebebef"></div>
      <div class="abs" style="left:512px;top:237px;width:1px;height:415px;background:#ebebef"></div>
      <div class="t" style="left:129.05px;top:245.50px;font-size:14.66px;line-height:19px;color:#b1b1b1;font-style:italic;transform:scaleX(1.0582);transform-origin:0 50%;">Без группы</div>
      <svg class="abs" style="left:254px;top:245px" width="18" height="18" viewBox="0 0 18 18"><path d="M7.4 1 h3.2 l.5 2.2 1.6.9 2.1-.8 1.6 2.8 -1.6 1.5 v1.8 l1.6 1.5 -1.6 2.8 -2.1-.8 -1.6.9 -.5 2.2 h-3.2 l-.5-2.2 -1.6-.9 -2.1.8 -1.6-2.8 1.6-1.5 v-1.8 l-1.6-1.5 1.6-2.8 2.1.8 1.6-.9z" fill="none" stroke="#cfcfd3" stroke-width="1.1" stroke-linejoin="round"/><circle cx="9" cy="9" r="2.7" fill="none" stroke="#cfcfd3" stroke-width="1.1"/></svg>
      <div class="t" style="left:357.14px;top:245.50px;font-size:14.66px;line-height:19px;color:#b1b1b1;font-style:italic;transform:scaleX(1.0661);transform-origin:0 50%;">Без группы</div>
      <svg class="abs" style="left:482px;top:245px" width="18" height="18" viewBox="0 0 18 18"><path d="M7.4 1 h3.2 l.5 2.2 1.6.9 2.1-.8 1.6 2.8 -1.6 1.5 v1.8 l1.6 1.5 -1.6 2.8 -2.1-.8 -1.6.9 -.5 2.2 h-3.2 l-.5-2.2 -1.6-.9 -2.1.8 -1.6-2.8 1.6-1.5 v-1.8 l-1.6-1.5 1.6-2.8 2.1.8 1.6-.9z" fill="none" stroke="#cfcfd3" stroke-width="1.1" stroke-linejoin="round"/><circle cx="9" cy="9" r="2.7" fill="none" stroke="#cfcfd3" stroke-width="1.1"/></svg>
      <svg class="abs" style="left:69.5px;top:281.5px" width="15" height="14" viewBox="0 0 15 14"><path d="M0.8 0.8 H14.2 L9.8 8 H5.2 Z" fill="none" stroke="#8a8a8a" stroke-width="1.2" stroke-linejoin="round"/><rect x="5.2" y="8" width="4.6" height="5" fill="none" stroke="#8a8a8a" stroke-width="1.2"/></svg>
      <div class="t" style="left:90.85px;top:278.25px;font-size:17.95px;line-height:23px;color:#5a5a5a;transform:scaleX(1.0643);transform-origin:0 50%;">№ пациента</div>
      <svg class="abs" style="left:252.8px;top:283.2px" width="14" height="13" viewBox="0 0 14 13"><path d="M0 0.9 H14 M0 6.5 H14 M0 12.1 H14" stroke="#8f8f8f" stroke-width="1.3"/></svg>
      <svg class="abs" style="left:297.5px;top:281.5px" width="15" height="14" viewBox="0 0 15 14"><path d="M0.8 0.8 H14.2 L9.8 8 H5.2 Z" fill="none" stroke="#8a8a8a" stroke-width="1.2" stroke-linejoin="round"/><rect x="5.2" y="8" width="4.6" height="5" fill="none" stroke="#8a8a8a" stroke-width="1.2"/></svg>
      <div class="t" style="left:318.59px;top:278.25px;font-size:17.95px;line-height:23px;color:#5a5a5a;transform:scaleX(1.1263);transform-origin:0 50%;">Пол</div>
      <svg class="abs" style="left:481.2px;top:283.2px" width="14" height="13" viewBox="0 0 14 13"><path d="M0 0.9 H14 M0 6.5 H14 M0 12.1 H14" stroke="#8f8f8f" stroke-width="1.3"/></svg>
      <svg class="abs" style="left:525.7px;top:281.5px" width="15" height="14" viewBox="0 0 15 14"><path d="M0.8 0.8 H14.2 L9.8 8 H5.2 Z" fill="none" stroke="#8a8a8a" stroke-width="1.2" stroke-linejoin="round"/><rect x="5.2" y="8" width="4.6" height="5" fill="none" stroke="#8a8a8a" stroke-width="1.2"/></svg>
      <div class="t" style="left:547.51px;top:278.25px;font-size:17.95px;line-height:23px;color:#5a5a5a;width:28.20px;overflow:hidden;transform:scaleX(1.046);transform-origin:0 50%;">Возраст</div>
      <div class="t" style="left:77.63px;top:353.60px;font-size:14.80px;line-height:19px;color:#6a6a6a;transform:scaleX(1.0656);transform-origin:0 50%;">Не определено</div>
      <svg class="abs" style="left:248.8px;top:358.6px" width="12" height="8" viewBox="0 0 12 8"><path d="M0.7 0.7 L6 7 L11.3 0.7" stroke="#b3b3b3" stroke-width="1.1" fill="none"/></svg>
      <div class="t" style="left:305.12px;top:353.60px;font-size:14.80px;line-height:19px;color:#6a6a6a;transform:scaleX(1.0776);transform-origin:0 50%;">Категориальная</div>
      <svg class="abs" style="left:477.3px;top:358.6px" width="12" height="8" viewBox="0 0 12 8"><path d="M0.7 0.7 L6 7 L11.3 0.7" stroke="#b3b3b3" stroke-width="1.1" fill="none"/></svg>
      <div class="t" style="left:534.19px;top:353.60px;font-size:14.80px;line-height:19px;color:#6a6a6a;width:40.95px;overflow:hidden;transform:scaleX(1.05);transform-origin:0 50%;">Количественная</div>
      <div class="rl" style="top:384.75px"></div>
      <div class="t" style="left:26.89px;top:393.60px;font-size:14.80px;line-height:19px;color:#b0b0b0;transform:scaleX(1.05);transform-origin:0 50%;">1</div>
      <div class="t" style="left:64.79px;top:393.60px;font-size:14.80px;line-height:19px;color:#1f1f1f;transform:scaleX(1.05);transform-origin:0 50%;">1</div>
      <div class="t" style="left:296.92px;top:393.60px;font-size:14.80px;line-height:19px;color:#1f1f1f;transform:scaleX(1.0779);transform-origin:0 50%;">1 (Показатель 2)</div>
      <svg class="abs" style="left:486.2px;top:399.25px" width="12" height="8" viewBox="0 0 12 8"><path d="M0.7 0.7 L6 7 L11.3 0.7" stroke="#b3b3b3" stroke-width="1.1" fill="none"/></svg>
      <div class="rl" style="top:421.23px"></div>
      <div class="t" style="left:26.89px;top:430.08px;font-size:14.80px;line-height:19px;color:#b0b0b0;transform:scaleX(1.05);transform-origin:0 50%;">2</div>
      <div class="t" style="left:64.79px;top:430.08px;font-size:14.80px;line-height:19px;color:#1f1f1f;transform:scaleX(1.05);transform-origin:0 50%;">2</div>
      <div class="t" style="left:296.92px;top:430.08px;font-size:14.80px;line-height:19px;color:#1f1f1f;transform:scaleX(1.0779);transform-origin:0 50%;">1 (Показатель 2)</div>
      <svg class="abs" style="left:486.2px;top:435.73px" width="12" height="8" viewBox="0 0 12 8"><path d="M0.7 0.7 L6 7 L11.3 0.7" stroke="#b3b3b3" stroke-width="1.1" fill="none"/></svg>
      <div class="rl" style="top:457.71px"></div>
      <div class="t" style="left:26.89px;top:466.56px;font-size:14.80px;line-height:19px;color:#b0b0b0;transform:scaleX(1.05);transform-origin:0 50%;">3</div>
      <div class="t" style="left:64.79px;top:466.56px;font-size:14.80px;line-height:19px;color:#1f1f1f;transform:scaleX(1.05);transform-origin:0 50%;">3</div>
      <div class="t" style="left:296.92px;top:466.56px;font-size:14.80px;line-height:19px;color:#1f1f1f;transform:scaleX(1.0779);transform-origin:0 50%;">1 (Показатель 2)</div>
      <svg class="abs" style="left:486.2px;top:472.21px" width="12" height="8" viewBox="0 0 12 8"><path d="M0.7 0.7 L6 7 L11.3 0.7" stroke="#b3b3b3" stroke-width="1.1" fill="none"/></svg>
      <div class="rl" style="top:494.19px"></div>
      <div class="t" style="left:26.89px;top:503.04px;font-size:14.80px;line-height:19px;color:#b0b0b0;transform:scaleX(1.05);transform-origin:0 50%;">4</div>
      <div class="t" style="left:64.79px;top:503.04px;font-size:14.80px;line-height:19px;color:#1f1f1f;transform:scaleX(1.05);transform-origin:0 50%;">4</div>
      <div class="t" style="left:296.92px;top:503.04px;font-size:14.80px;line-height:19px;color:#1f1f1f;transform:scaleX(1.0779);transform-origin:0 50%;">0 (Показатель 1)</div>
      <svg class="abs" style="left:486.2px;top:508.69px" width="12" height="8" viewBox="0 0 12 8"><path d="M0.7 0.7 L6 7 L11.3 0.7" stroke="#b3b3b3" stroke-width="1.1" fill="none"/></svg>
      <div class="rl" style="top:530.67px"></div>
      <div class="t" style="left:26.89px;top:539.52px;font-size:14.80px;line-height:19px;color:#b0b0b0;transform:scaleX(1.05);transform-origin:0 50%;">5</div>
      <div class="t" style="left:64.79px;top:539.52px;font-size:14.80px;line-height:19px;color:#1f1f1f;transform:scaleX(1.05);transform-origin:0 50%;">5</div>
      <div class="t" style="left:296.92px;top:539.52px;font-size:14.80px;line-height:19px;color:#1f1f1f;transform:scaleX(1.0779);transform-origin:0 50%;">0 (Показатель 1)</div>
      <svg class="abs" style="left:486.2px;top:545.17px" width="12" height="8" viewBox="0 0 12 8"><path d="M0.7 0.7 L6 7 L11.3 0.7" stroke="#b3b3b3" stroke-width="1.1" fill="none"/></svg>
      <div class="rl" style="top:567.15px"></div>
      <div class="t" style="left:26.89px;top:576.00px;font-size:14.80px;line-height:19px;color:#b0b0b0;transform:scaleX(1.05);transform-origin:0 50%;">6</div>
      <div class="t" style="left:64.79px;top:576.00px;font-size:14.80px;line-height:19px;color:#1f1f1f;transform:scaleX(1.05);transform-origin:0 50%;">6</div>
      <div class="t" style="left:296.92px;top:576.00px;font-size:14.80px;line-height:19px;color:#1f1f1f;transform:scaleX(1.0779);transform-origin:0 50%;">1 (Показатель 2)</div>
      <svg class="abs" style="left:486.2px;top:581.65px" width="12" height="8" viewBox="0 0 12 8"><path d="M0.7 0.7 L6 7 L11.3 0.7" stroke="#b3b3b3" stroke-width="1.1" fill="none"/></svg>
      <div class="rl" style="top:603.63px"></div>
      <div class="t" style="left:26.89px;top:612.48px;font-size:14.80px;line-height:19px;color:#b0b0b0;transform:scaleX(1.05);transform-origin:0 50%;">7</div>
      <div class="t" style="left:64.79px;top:612.48px;font-size:14.80px;line-height:19px;color:#1f1f1f;transform:scaleX(1.05);transform-origin:0 50%;">7</div>
      <div class="t" style="left:296.92px;top:612.48px;font-size:14.80px;line-height:19px;color:#1f1f1f;transform:scaleX(1.0779);transform-origin:0 50%;">0 (Показатель 1)</div>
      <svg class="abs" style="left:486.2px;top:618.13px" width="12" height="8" viewBox="0 0 12 8"><path d="M0.7 0.7 L6 7 L11.3 0.7" stroke="#b3b3b3" stroke-width="1.1" fill="none"/></svg>
      <div class="rl" style="top:640.11px"></div>
      <div class="abs" style="left:578px;top:237px;width:17px;height:415px;background:#fafafb"></div>
      <svg class="abs" style="left:581px;top:242.5px" width="11" height="6" viewBox="0 0 11 6"><path d="M0 6 L5.5 0 L11 6Z" fill="#5c5c5c"/></svg>
      <div class="abs" style="left:581.5px;top:256px;width:10px;height:283px;border-radius:5px;background:#878787"></div>
      <svg class="abs" style="left:581px;top:637px" width="11" height="6" viewBox="0 0 11 6"><path d="M0 0 L5.5 6 L11 0Z" fill="#5c5c5c"/></svg>
      <div class="abs" style="left:10px;top:652px;width:585px;height:17px;background:#fafafb"></div>
      <svg class="abs" style="left:14px;top:654.5px" width="7" height="11" viewBox="0 0 7 11"><path d="M7 0 L0 5.5 L7 11Z" fill="#5c5c5c"/></svg>
      <div class="abs" style="left:29.5px;top:655px;width:54px;height:10px;border-radius:5px;background:#878787"></div>
      <svg class="abs" style="left:564.5px;top:654.5px" width="7" height="11" viewBox="0 0 7 11"><path d="M0 0 L7 5.5 L0 11Z" fill="#5c5c5c"/></svg>
      <div class="abs" style="left:10px;top:671px;width:584.5px;height:53.5px;background:#f8f8fa;border:1px solid #ececf0;box-shadow:0 1px 2px rgba(0,0,0,.04)"></div>
      <div class="t" style="left:31.78px;top:686.70px;font-size:16.69px;line-height:21px;color:#6e6ee0;font-weight:700;transform:scaleX(1.1152);transform-origin:0 50%;">Добавить</div>
      <div class="abs" style="left:131.6px;top:679.4px;width:96.2px;height:35.3px;background:#fff;border:1px solid #d8d8dc;border-radius:3px"></div>
      <div class="t" style="left:144.39px;top:688.20px;font-size:14.66px;line-height:19px;color:#444;transform:scaleX(1.05);transform-origin:0 50%;">1</div>
      <div class="t" style="left:236.44px;top:684.70px;font-size:18.30px;line-height:23px;color:#666;transform:scaleX(1.1488);transform-origin:0 50%;">строк</div>
      <div class="t" style="left:415.65px;top:687.80px;font-size:15.50px;line-height:20px;color:#8bc46a;transform:scaleX(1.1100);transform-origin:0 50%;">Данные загружены!</div>
      <div class="abs" style="left:604.4px;top:217.5px;width:2px;height:526px;background:#c6c6c9"></div>
      <svg class="abs" style="left:615px;top:247.5px" width="13" height="14" viewBox="0 0 13 14"><path d="M1.2 7.2 L4.6 12 L11.6 1.2" stroke="#6fd44b" stroke-width="2" fill="none"/></svg>
      <div class="t" style="left:638.07px;top:244.50px;font-size:15.71px;line-height:20px;color:#454545;transform:scaleX(1.0773);transform-origin:0 50%;">Анализ выполнен успешно</div>
      <div class="abs" style="left:1234.5px;top:234.5px;width:164px;height:36.5px;border:1.3px dashed #d3a791;border-radius:5px;background:#faf6f5"></div>
      <svg class="abs" style="left:1246px;top:243px" width="21" height="19" viewBox="0 0 21 19"><path d="M1.2 0 V17.5 H20.5" stroke="#c79277" stroke-width="1.6" fill="none"/><path d="M4.5 13 L9 7.5 L12.5 10.5 L18.5 4" stroke="#c79277" stroke-width="1.6" fill="none"/></svg>
      <div class="t" style="left:1273.20px;top:243.70px;font-size:13.55px;line-height:17px;color:#c99f88;transform:scaleX(1.0789);transform-origin:0 50%;">Скачать графики</div>
      <div class="abs" style="left:1408.3px;top:234.5px;width:142.5px;height:36.5px;border:1.3px dashed #3d7edb;border-radius:5px;background:#f4f7fd"></div>
      <svg class="abs" style="left:1420px;top:241px" width="20" height="23" viewBox="0 0 20 23"><path d="M1.2 1 H12.5 L18.8 7.3 V22 H1.2 Z" fill="#fff" stroke="#2f6fd6" stroke-width="1.7" stroke-linejoin="round"/><path d="M12.2 1.2 V7.5 H18.6" fill="none" stroke="#2f6fd6" stroke-width="1.5"/><text x="10" y="19" font-family="Liberation Sans" font-weight="700" font-size="10" fill="#2f6fd6" text-anchor="middle">W</text></svg>
      <div class="t" style="left:1447.19px;top:243.70px;font-size:13.55px;line-height:17px;color:#5b84d9;transform:scaleX(1.0880);transform-origin:0 50%;">Скачать Word</div>
      <div id="doc" style="left:616px;top:287.7px;width:934.5px;height:437.0px"><div class="abs" style="left:919px;top:0;width:16px;height:437px;background:#fcfcfd"></div><svg class="abs" style="left:920.8px;top:6.8px" width="11" height="6" viewBox="0 0 11 6"><path d="M0 6 L5.5 0 L11 6Z" fill="#a3a3a3"/></svg><div class="abs" style="left:921.3px;top:286.1px;width:10px;height:131px;border-radius:5px;background:#909090"></div><svg class="abs" style="left:920.8px;top:423.8px" width="11" height="6" viewBox="0 0 11 6"><path d="M0 0 L5.5 6 L11 0Z" fill="#9a9a9a"/></svg><div class="ln" style="left:152.00px;top:12.30px;width:613.50px;height:1.5px"></div><div class="ln" style="left:152.00px;top:-1.70px;width:1.5px;height:15.50px"></div><div class="ln" style="left:322.00px;top:-1.70px;width:1.5px;height:15.50px"></div><div class="ln" style="left:448.00px;top:-1.70px;width:1.5px;height:15.50px"></div><div class="ln" style="left:582.00px;top:-1.70px;width:1.5px;height:15.50px"></div><div class="ln" style="left:624.00px;top:-1.70px;width:1.5px;height:15.50px"></div><div class="ln" style="left:689.00px;top:-1.70px;width:1.5px;height:15.50px"></div><div class="ln" style="left:764.00px;top:-1.70px;width:1.5px;height:15.50px"></div><div class="ln" style="left:94.00px;top:72.30px;width:729.50px;height:1.5px"></div><div class="ln" style="left:94.00px;top:115.30px;width:729.50px;height:1.5px"></div><div class="ln" style="left:312.00px;top:160.30px;width:511.50px;height:1.5px"></div><div class="ln" style="left:312.00px;top:205.30px;width:511.50px;height:1.5px"></div><div class="ln" style="left:312.00px;top:249.30px;width:511.50px;height:1.5px"></div><div class="ln" style="left:94.00px;top:294.30px;width:729.50px;height:1.5px"></div><div class="ln" style="left:312.00px;top:338.30px;width:511.50px;height:1.5px"></div><div class="ln" style="left:312.00px;top:383.30px;width:511.50px;height:1.5px"></div><div class="ln" style="left:94.00px;top:427.30px;width:729.50px;height:1.5px"></div><div class="ln" style="left:94.00px;top:72.30px;width:1.5px;height:356.50px"></div><div class="ln" style="left:312.00px;top:72.30px;width:1.5px;height:356.50px"></div><div class="ln" style="left:601.00px;top:72.30px;width:1.5px;height:356.50px"></div><div class="ln" style="left:660.00px;top:72.30px;width:1.5px;height:356.50px"></div><div class="ln" style="left:716.00px;top:72.30px;width:1.5px;height:356.50px"></div><div class="ln" style="left:822.00px;top:72.30px;width:1.5px;height:356.50px"></div><div class="t" style="left:95.00px;top:31.40px;font-size:18.30px;line-height:23px;color:#111;font-family:'Liberation Serif',serif;width:728.00px;text-align:center;">Таблица 2 - Описательная статистика категориальных переменных</div><div class="t" style="left:95.00px;top:83.45px;font-size:18.30px;line-height:23px;color:#111;font-family:'Liberation Serif',serif;width:218.00px;text-align:center;">Показатели</div><div class="t" style="left:313.00px;top:83.45px;font-size:18.30px;line-height:23px;color:#111;font-family:'Liberation Serif',serif;width:289.00px;text-align:center;">Категории</div><div class="t" style="left:602.00px;top:83.45px;font-size:18.30px;line-height:23px;color:#111;font-family:'Liberation Serif',serif;width:58.40px;text-align:center;">Абс.</div><div class="t" style="left:660.40px;top:83.45px;font-size:18.30px;line-height:23px;color:#111;font-family:'Liberation Serif',serif;width:55.90px;text-align:center;">%</div><div class="t" style="left:716.30px;top:83.45px;font-size:18.30px;line-height:23px;color:#111;font-family:'Liberation Serif',serif;width:106.50px;text-align:center;">95% ДИ</div><div class="t" style="left:313.00px;top:127.51px;font-size:18.30px;line-height:23px;color:#111;font-family:'Liberation Serif',serif;width:289.00px;text-align:center;">Норма</div><div class="t" style="left:602.00px;top:127.51px;font-size:18.30px;line-height:23px;color:#111;font-family:'Liberation Serif',serif;width:58.40px;text-align:center;">4</div><div class="t" style="left:660.40px;top:127.51px;font-size:18.30px;line-height:23px;color:#111;font-family:'Liberation Serif',serif;width:55.90px;text-align:center;">36,4</div><div class="t" style="left:716.30px;top:127.51px;font-size:18.30px;line-height:23px;color:#111;font-family:'Liberation Serif',serif;width:106.50px;text-align:center;">10,9 – 69,2</div><div class="t" style="left:313.00px;top:172.19px;font-size:18.30px;line-height:23px;color:#111;font-family:'Liberation Serif',serif;width:289.00px;text-align:center;">Избыточная масса тела</div><div class="t" style="left:602.00px;top:172.19px;font-size:18.30px;line-height:23px;color:#111;font-family:'Liberation Serif',serif;width:58.40px;text-align:center;">3</div><div class="t" style="left:660.40px;top:172.19px;font-size:18.30px;line-height:23px;color:#111;font-family:'Liberation Serif',serif;width:55.90px;text-align:center;">27,3</div><div class="t" style="left:716.30px;top:172.19px;font-size:18.30px;line-height:23px;color:#111;font-family:'Liberation Serif',serif;width:106.50px;text-align:center;">6,0 – 61,0</div><div class="t" style="left:313.00px;top:216.73px;font-size:18.30px;line-height:23px;color:#111;font-family:'Liberation Serif',serif;width:289.00px;text-align:center;">Ожирение 1 степени</div><div class="t" style="left:602.00px;top:216.73px;font-size:18.30px;line-height:23px;color:#111;font-family:'Liberation Serif',serif;width:58.40px;text-align:center;">2</div><div class="t" style="left:660.40px;top:216.73px;font-size:18.30px;line-height:23px;color:#111;font-family:'Liberation Serif',serif;width:55.90px;text-align:center;">18,2</div><div class="t" style="left:716.30px;top:216.73px;font-size:18.30px;line-height:23px;color:#111;font-family:'Liberation Serif',serif;width:106.50px;text-align:center;">2,3 – 51,8</div><div class="t" style="left:313.00px;top:261.25px;font-size:18.30px;line-height:23px;color:#111;font-family:'Liberation Serif',serif;width:289.00px;text-align:center;">Ожирение 2 степени</div><div class="t" style="left:602.00px;top:261.25px;font-size:18.30px;line-height:23px;color:#111;font-family:'Liberation Serif',serif;width:58.40px;text-align:center;">2</div><div class="t" style="left:660.40px;top:261.25px;font-size:18.30px;line-height:23px;color:#111;font-family:'Liberation Serif',serif;width:55.90px;text-align:center;">18,2</div><div class="t" style="left:716.30px;top:261.25px;font-size:18.30px;line-height:23px;color:#111;font-family:'Liberation Serif',serif;width:106.50px;text-align:center;">2,3 – 51,8</div><div class="t" style="left:313.00px;top:305.78px;font-size:18.30px;line-height:23px;color:#111;font-family:'Liberation Serif',serif;width:289.00px;text-align:center;">Норма</div><div class="t" style="left:602.00px;top:305.78px;font-size:18.30px;line-height:23px;color:#111;font-family:'Liberation Serif',serif;width:58.40px;text-align:center;">3</div><div class="t" style="left:660.40px;top:305.78px;font-size:18.30px;line-height:23px;color:#111;font-family:'Liberation Serif',serif;width:55.90px;text-align:center;">27,3</div><div class="t" style="left:716.30px;top:305.78px;font-size:18.30px;line-height:23px;color:#111;font-family:'Liberation Serif',serif;width:106.50px;text-align:center;">6,0 – 61,0</div><div class="t" style="left:313.00px;top:350.31px;font-size:18.30px;line-height:23px;color:#111;font-family:'Liberation Serif',serif;width:289.00px;text-align:center;">Легкие когнитивные нарушения</div><div class="t" style="left:602.00px;top:350.31px;font-size:18.30px;line-height:23px;color:#111;font-family:'Liberation Serif',serif;width:58.40px;text-align:center;">2</div><div class="t" style="left:660.40px;top:350.31px;font-size:18.30px;line-height:23px;color:#111;font-family:'Liberation Serif',serif;width:55.90px;text-align:center;">18,2</div><div class="t" style="left:716.30px;top:350.31px;font-size:18.30px;line-height:23px;color:#111;font-family:'Liberation Serif',serif;width:106.50px;text-align:center;">2,3 – 51,8</div><div class="t" style="left:313.00px;top:394.85px;font-size:18.30px;line-height:23px;color:#111;font-family:'Liberation Serif',serif;width:289.00px;text-align:center;">Тяжелые когнитивные нарушения</div><div class="t" style="left:602.00px;top:394.85px;font-size:18.30px;line-height:23px;color:#111;font-family:'Liberation Serif',serif;width:58.40px;text-align:center;">6</div><div class="t" style="left:660.40px;top:394.85px;font-size:18.30px;line-height:23px;color:#111;font-family:'Liberation Serif',serif;width:55.90px;text-align:center;">54,5</div><div class="t" style="left:716.30px;top:394.85px;font-size:18.30px;line-height:23px;color:#111;font-family:'Liberation Serif',serif;width:106.50px;text-align:center;">23,4 – 83,3</div><div class="t" style="left:95.00px;top:194.31px;font-size:18.30px;line-height:23px;color:#111;font-family:'Liberation Serif',serif;width:218.00px;text-align:center;">Степени ожирения</div><div class="t" style="left:95.00px;top:350.31px;font-size:18.30px;line-height:23px;color:#111;font-family:'Liberation Serif',serif;width:218.00px;text-align:center;">Когнитивные нарушения</div><svg class="abs" style="left:380.5px;top:94.8px" width="16" height="24" viewBox="0 0 16 24"><path d="M1 1 V18.5 L5.2 14.6 L8.2 21.8 L11 20.6 L8 13.6 L13.8 13.4 Z" fill="#fff" stroke="#111" stroke-width="1.2" stroke-linejoin="round"/></svg></div>
    </div>
  </div>
  <div class="abs" style="left:0;top:1028.5px;width:1920px;height:1.6px;background:#eeeef0"></div><div class="abs" style="left:0;top:1030px;width:1920px;height:2px;background:linear-gradient(90deg,#474545 0,#474545 60px,#f2f2f2 60px,#f2f2f2 420px,#403e3e 420px,#403e3e 548px,#c46a30 548px,#c46a30 608px,#403e3e 608px,#403e3e 735px,#5c5c5c 735px,#5c5c5c 790px,#434141 790px)"></div>
</div>
</body>
</html>
